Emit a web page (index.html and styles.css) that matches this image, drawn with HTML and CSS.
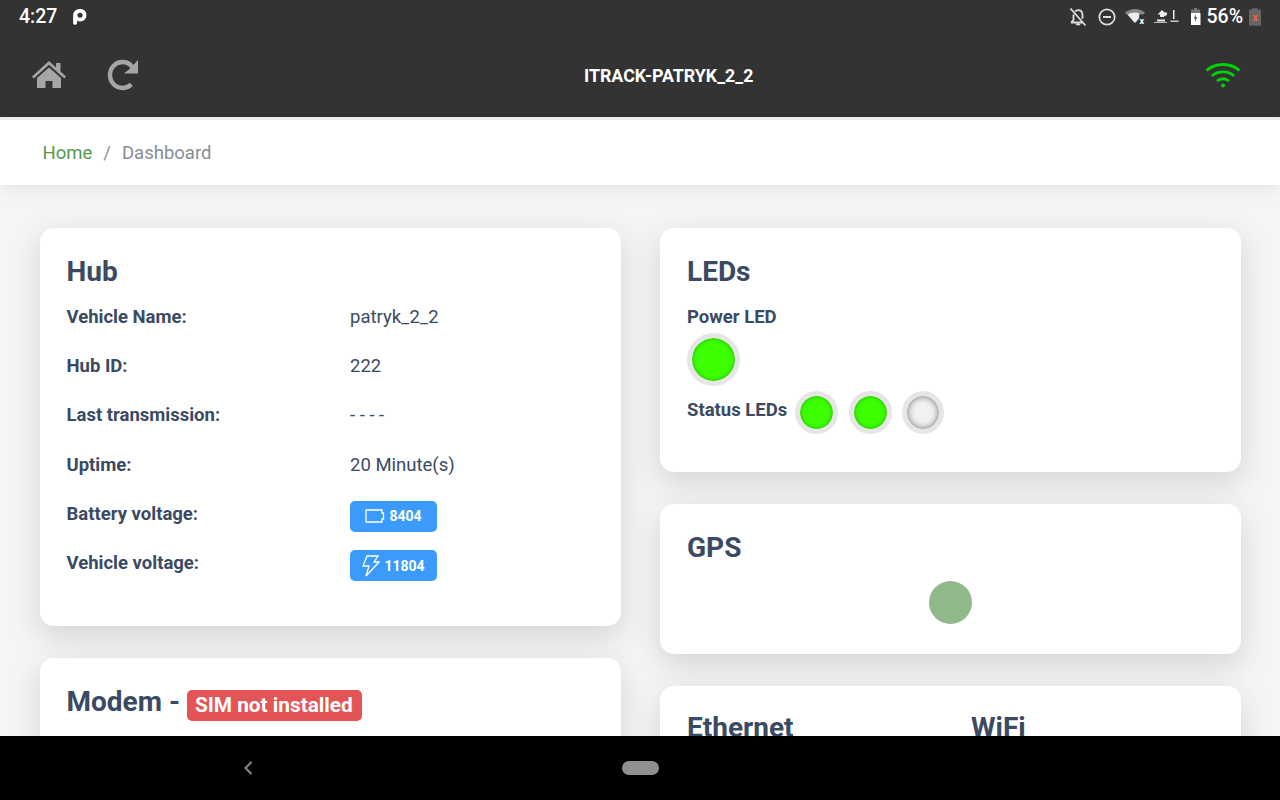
FILE: index.html
```html
<!DOCTYPE html>
<html>
<head lang="en">
    <meta charset="UTF-8">
    <title>Dashboard</title>
    <link rel="stylesheet" href="styles.css">
</head>
<body>
<div class="screen">
    <div class="status-bar">
        <div class="status-left">
            <span class="clock">4:27</span>
            <svg class="p-icon" width="15" height="17" viewBox="0 0 14 16"><path fill="#fff" d="M7.500 1C3.800 1 1 3.500 1 7v7c0 1 .8 1.700 1.800 1.700S4.700 15 4.700 14v-1.900c.9.300 1.800.5 2.800.5 3.600 0 6-2.400 6-5.800S11.100 1 7.500 1zm0 8.200c-1.500 0-2.500-1-2.500-2.400s1-2.400 2.500-2.400S10 5.400 10 6.800 9 9.200 7.500 9.200z"/></svg>
        </div>
        <div class="status-right">
            <svg class="st-bell" width="18" height="20" viewBox="0 0 18 20"><path fill="none" stroke="#ddd" stroke-width="1.800" d="M6 4.500C7 3.500 8 3.200 9 3.200c3 0 4.500 2.400 4.500 5v3.500M4.500 7.500v5.300L2.800 14.800v.7h11M7.300 16.800c.3 1 3 1 3.400 0M1.500 1.500l15 17"/></svg>
            <svg class="st-dnd" width="18" height="18" viewBox="0 0 18 18"><circle cx="9" cy="9" r="7.700" fill="none" stroke="#ddd" stroke-width="1.700"/><rect x="5" y="8" width="8" height="2" fill="#ddd"/></svg>
            <svg class="st-wifi" width="21" height="16" viewBox="0 0 21 16"><path fill="#888" d="M0 3.500C3 1.200 6.200 0 10 0s7 1.200 10 3.500l-1.500 2H1.500z"/><path fill="#eee" d="M2.500 5.500C4.500 4.200 7 3.500 10 3.500c1.500 0 3 .2 4.200.7V9l-3.500 4.500h-1.400z"/><text x="14.500" y="15" class="st-x">x</text></svg>
            <svg class="st-sync" width="26" height="16" viewBox="0 0 26 16"><path fill="#eee" d="M6 8V5.500H3.500L8 1l2.500 2.500c2-.5 3 .5 2.500 2L11 7.500 10 6.500V8z"/><path fill="none" stroke="#bbb" stroke-width="1" d="M0 13.500h13"/><path fill="#eee" d="M3 10.500h8v2H3z"/><path fill="#eee" d="M19 1h1.500v9H19z"/><path fill="#ccc" d="M16.500 11.500h8V13h-8z"/></svg>
            <svg class="st-batt" width="10" height="17" viewBox="0 0 10 17"><path fill="#777" d="M3 0h3v1.500h3V5H0V1.500h3z"/><path fill="#fff" d="M0 5h9.500v12H0z"/><path fill="#444" d="M5 6 2.800 10.500h1.500L4 14l2.200-4.700H4.700z"/></svg>
            <span class="percent">56%</span>
            <svg class="st-batt2" width="12" height="18" viewBox="0 0 13 19"><path fill="#666" d="M3.500 0h6v1.500H13V19H0V1.500h3.500z"/><text x="6.500" y="14" class="st-xred">x</text></svg>
        </div>
    </div>
    <header class="app-bar">
        <div class="app-left">
            <svg width="34" height="28" viewBox="0 0 34 28"><path fill="#a6a6a6" d="M17 0 24 6.500V2h4.500v8.600L34 15.500 32.300 17.500 17 3.800 1.700 17.500 0 15.500z"/><path fill="#a6a6a6" d="M17 6.500 29 17v10H20.500v-7h-7v7H5V17z"/></svg>
            <svg width="32" height="32" viewBox="0 0 32 32"><path fill="none" stroke="#a6a6a6" stroke-width="4.400" d="M27 11.500C25 6 20.500 3 15.500 3 8.600 3 3 8.600 3 16s5.600 13 12.500 13c3.500 0 6.500-1.500 8.800-3.700"/><path fill="#a6a6a6" d="M31 1v13.500H17l5.500-4.500z"/></svg>
        </div>
        <div class="app-title">ITRACK-PATRYK_2_2</div>
        <svg class="app-wifi" width="36" height="26" viewBox="0 0 36 26"><g fill="none" stroke="#00d400" stroke-width="2.800"><path d="M1.500 8.500C10.500.5 25.500.5 34.500 8.500"/><path d="M6.800 14C13 8.500 23 8.500 29.200 14"/><path d="M12 19c3.500-3 8.500-3 12 0"/></g><circle cx="18" cy="23.500" r="2" fill="#00d400"/></svg>
    </header>
    <nav class="breadcrumb">
        <a class="crumb-link">Home</a>
        <span class="crumb-sep">/</span>
        <span class="crumb-active">Dashboard</span>
    </nav>
    <main class="content">
        <div class="column">
            <section class="card card-hub">
                <h2>Hub</h2>
                <div class="info-row"><b>Vehicle Name:</b><span>patryk_2_2</span></div>
                <div class="info-row"><b>Hub ID:</b><span>222</span></div>
                <div class="info-row"><b>Last transmission:</b><span>- - - -</span></div>
                <div class="info-row"><b>Uptime:</b><span>20 Minute(s)</span></div>
                <div class="info-row"><b>Battery voltage:</b><span><em class="volt">
                    <svg width="20" height="14" viewBox="0 0 20 14"><path fill="none" stroke="#fff" stroke-width="1.300" d="M1 1h16v3h1.500v6H17v3H1z"/></svg>8404</em></span></div>
                <div class="info-row"><b>Vehicle voltage:</b><span><em class="volt">
                    <svg width="18" height="22" viewBox="0 0 18 22"><path fill="none" stroke="#fff" stroke-width="1.300" d="M5 1h11l-4 6h5L4 21l3-10H1z"/></svg>11804</em></span></div>
            </section>
            <section class="card card-modem">
                <h2>Modem - <em class="sim">SIM not installed</em></h2>
            </section>
        </div>
        <div class="column">
            <section class="card card-leds">
                <h2>LEDs</h2>
                <b class="led-label">Power LED</b>
                <div class="led led-big"></div>
                <div class="led-row">
                    <b class="led-label">Status LEDs</b>
                    <div class="led led-on"></div>
                    <div class="led led-on"></div>
                    <div class="led led-off"></div>
                </div>
            </section>
            <section class="card card-gps">
                <h2>GPS</h2>
                <div class="gps-dot"></div>
            </section>
            <section class="card card-net">
                <h2>Ethernet</h2>
                <h2>WiFi</h2>
            </section>
        </div>
    </main>
    <div class="nav-bar">
        <svg class="nav-back" width="12" height="16" viewBox="0 0 12 16"><path fill="none" stroke="#8a8a8a" stroke-width="2" d="M9.500 2 3.500 8 9.500 14"/></svg>
        <div class="nav-home"></div>
    </div>
</div>
</body>
</html>
```

FILE: styles.css
```css
* {
    margin: 0;
    padding: 0;
    box-sizing: border-box;
}

body {
    font-family: Roboto, "Liberation Sans", sans-serif;
    color: #3a4a63;
    overflow: hidden;
}

.screen {
    width: 1280px;
    height: 800px;
    display: flex;
    flex-direction: column;
    overflow: hidden;
    background: #f5f5f5;
}

.status-bar {
    height: 33px;
    flex: none;
    background: #333;
    color: #fff;
    display: flex;
    justify-content: space-between;
    align-items: center;
    padding: 0 19px 0 19px;
}

.status-left {
    display: flex;
    align-items: center;
    gap: 15px;
}

.clock {
    font-size: 19.5px;
    font-weight: 500;
}

.status-right {
    display: flex;
    align-items: center;
}

.st-bell {
    margin-right: 11px;
}

.st-dnd {
    margin-right: 9px;
}

.st-wifi {
    margin-right: 8px;
}

.st-sync {
    margin-right: 11px;
}

.st-x {
    font-size: 9px;
    font-weight: 700;
    fill: #fff;
}

.st-xred {
    font-size: 11px;
    font-weight: 700;
    fill: #f4623a;
    text-anchor: middle;
}

.percent {
    font-size: 19.5px;
    font-weight: 500;
    margin: 0 6px 0 5px;
}

.app-bar {
    height: 84px;
    flex: none;
    background: #333;
    display: flex;
    align-items: center;
    justify-content: space-between;
    padding: 0 39px 1px 32px;
    position: relative;
}

.app-left {
    display: flex;
    align-items: center;
    gap: 41px;
}

.app-title {
    position: absolute;
    left: 584px;
    top: 32px;
    color: #fff;
    font-size: 17.8px;
    font-weight: 700;
}

.breadcrumb {
    height: 68px;
    flex: none;
    background: #fff;
    border-top: 3px solid #ececec;
    padding: 0 0 0 42.500px;
    display: flex;
    align-items: center;
    font-size: 18.500px;
    box-shadow: 0 2px 18px rgba(0, 0, 0, 0.08);
    position: relative;
    z-index: 1;
}

.crumb-link {
    color: #559a4e;
}

.crumb-sep {
    color: #8a94a0;
    margin: 0 11px;
}

.crumb-active {
    color: #868e96;
}

.content {
    flex: 1;
    min-height: 0;
    overflow: hidden;
    display: grid;
    grid-template-columns: 581px 581px;
    column-gap: 39px;
    padding: 43px 0 0 40px;
}

.column {
    display: flex;
    flex-direction: column;
    gap: 32px;
}

.card {
    background: #fff;
    border-radius: 14px;
    padding: 27px 26.500px 0;
    box-shadow: 0 10px 30px rgba(50, 50, 70, 0.17);
    flex: none;
}

.card h2 {
    font-size: 28px;
    font-weight: 700;
    line-height: 33px;
    color: #3a4a63;
}

.card-hub {
    height: 398px;
}

.card-hub h2 {
    margin-bottom: 4.400px;
}

.info-row {
    display: grid;
    grid-template-columns: 283.500px 1fr;
    height: 49.2px;
    align-items: center;
    font-size: 18.500px;
}

.info-row b {
    font-weight: 700;
    font-size: 18.500px;
}

.volt {
    display: inline-flex;
    align-items: center;
    justify-content: center;
    gap: 4px;
    width: 87px;
    height: 31px;
    border-radius: 5px;
    background: #3a9bfc;
    color: #fff;
    font-style: normal;
    font-weight: 700;
    font-size: 14px;
    vertical-align: middle;
    position: relative;
    top: 2.600px;
}

.card-modem {
    height: 300px;
}

.sim {
    display: inline-block;
    background: #e55454;
    color: #fff;
    font-style: normal;
    font-size: 20.800px;
    line-height: 31px;
    padding: 0 9px 0 8px;
    border-radius: 5px;
    vertical-align: -1px;
}

.card-leds {
    height: 244px;
    padding-left: 27px;
}

.led-label {
    display: block;
    font-size: 18.500px;
    font-weight: 700;
    line-height: 21px;
}

.card-leds h2 {
    margin-bottom: 19px;
}

.led {
    border-radius: 50%;
    border: 5px solid #e6e6e6;
    background: #3dff00;
    box-shadow: inset 0 0 4px rgba(0, 80, 0, 0.5);
    background-clip: padding-box;
    flex: none;
}

.led-big {
    width: 53px;
    height: 53px;
    margin-top: 5px;
}

.led-row {
    display: flex;
    align-items: center;
    height: 44px;
    margin-top: 4px;
}

.led-row .led-label {
    margin: 0 8px 4px 0;
}

.led-on,
.led-off {
    width: 43px;
    height: 43px;
    margin-right: 10.500px;
}

.led-off {
    background: #f2f2f2;
    box-shadow: inset 0 0 7px rgba(0, 0, 0, 0.55);
    width: 42px;
}

.card-gps {
    height: 150px;
    padding-left: 27px;
}

.gps-dot {
    width: 43px;
    height: 43px;
    border-radius: 50%;
    background: #91b88b;
    margin: 17px 0 0 242px;
}

.card-net {
    height: 200px;
    padding: 25px 27px 0;
    display: grid;
    grid-template-columns: 284px 1fr;
    align-items: start;
}

.nav-bar {
    height: 64px;
    flex: none;
    background: #000;
    position: relative;
    z-index: 2;
    display: flex;
    align-items: center;
    padding-left: 242px;
}

.nav-home {
    width: 37px;
    height: 14px;
    border-radius: 7px;
    background: #8f8f8f;
    margin-left: 368px;
}
```
